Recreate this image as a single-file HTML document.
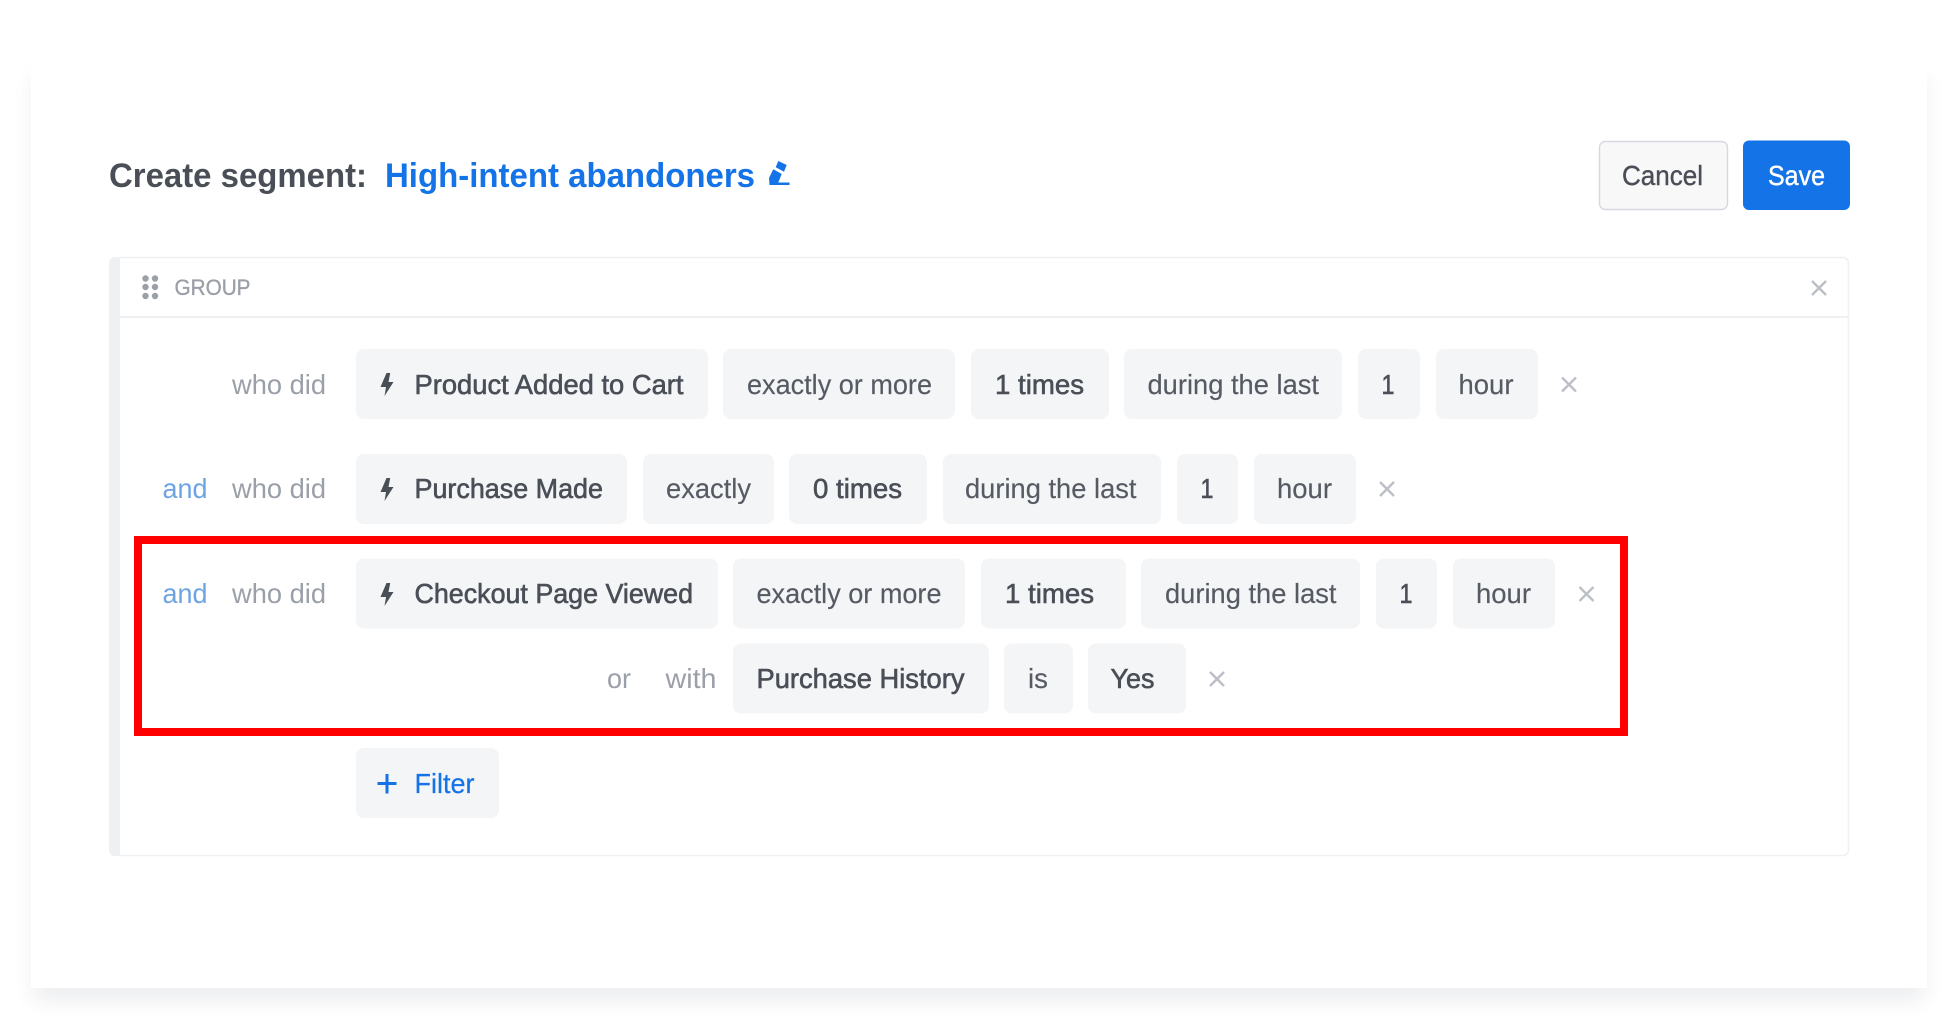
<!DOCTYPE html>
<html><head><meta charset="utf-8"><title>Create segment</title>
<style>
html,body{margin:0;padding:0;background:#fff;width:1958px;height:1016px;overflow:hidden}
#card{position:absolute;left:31px;top:60px;width:1896px;height:928px;background:#fff;box-shadow:0 15px 20px -3px rgba(40,50,70,.085)}
svg{position:absolute;left:0;top:0}
text{font-family:"Liberation Sans",sans-serif;font-size:27.5px;fill:#50555d}
.c{fill:#f4f5f7}
.m{fill:#4a4f57;stroke:#4a4f57;stroke-width:.6px}
.r{fill:#565b63;stroke:#565b63;stroke-width:.15px}
.g{fill:#9a9fa8}
.a{fill:#6ea3e2}
.x{stroke:#bcc0c6;stroke-width:2.4;fill:none}
.t{font-size:34.5px;font-weight:700}
</style></head><body>
<div id="card"></div>
<svg width="1958" height="1016" viewBox="0 0 1958 1016" xmlns="http://www.w3.org/2000/svg">
<defs>
<path id="b" d="M386.500 373H390.200L388.500 382H393.500L384.500 396L386 387H380.500Z" fill="#4a4f57"/>
<path id="xx" d="M-7 -7L7 7M7 -7L-7 7" class="x"/>
</defs>

<!-- Title -->
<text class="t" x="109" y="187" textLength="258" lengthAdjust="spacingAndGlyphs" style="fill:#4a4f57">Create segment:</text>
<text class="t" x="385" y="187" textLength="370" lengthAdjust="spacingAndGlyphs" style="fill:#1473e6">High-intent abandoners</text>
<path d="M778.300 161L786.700 165L784 171.700L775.700 167.300ZM773.300 169.300L781.700 174L778.300 182.500H789.500V185H769.500L769 178Z" fill="#1473e6"/>

<!-- Buttons -->
<rect x="1599.500" y="141.500" width="128" height="68" rx="6" fill="#f8f8f9" stroke="#d5d9df" stroke-width="1.4"/>
<text x="1622" y="185" textLength="81" lengthAdjust="spacingAndGlyphs" class="m" style="stroke-width:.4px">Cancel</text>
<rect x="1743" y="140.500" width="107" height="69.500" rx="6" fill="#1473e6"/>
<text x="1768" y="185" textLength="57" lengthAdjust="spacingAndGlyphs" style="fill:#fff;stroke:#fff;stroke-width:.4px">Save</text>

<!-- Panel -->
<rect x="109" y="257" width="1740" height="599" rx="6" fill="#eef0f2"/>
<path d="M120 258H1843a5 5 0 0 1 5 5V850a5 5 0 0 1-5 5H120Z" fill="#fff"/>
<path d="M120 257.500H1843a5.500 5.500 0 0 1 5.500 5.500V850a5.500 5.500 0 0 1-5.500 5.500H120" fill="none" stroke="#eff0f2" stroke-width="1.6"/>
<path d="M120 317H1849" stroke="#eff0f2" stroke-width="2"/>
<g fill="#9a9fa8">
<circle cx="145.500" cy="278.500" r="3.200"/><circle cx="155" cy="278.500" r="3.200"/>
<circle cx="145.500" cy="287" r="3.200"/><circle cx="155" cy="287" r="3.200"/>
<circle cx="145.500" cy="296" r="3.200"/><circle cx="155" cy="296" r="3.200"/>
</g>
<text x="174.500" y="295" textLength="76" lengthAdjust="spacingAndGlyphs" class="g" style="font-size:22.5px;stroke:#9a9fa8;stroke-width:.35px">GROUP</text>
<use href="#xx" x="1819" y="288"/>

<!-- Row 1 -->
<text x="232" y="394" textLength="94" lengthAdjust="spacingAndGlyphs" class="g">who did</text>
<rect class="c" x="356" y="349" width="352" height="70" rx="8"/>
<use href="#b"/>
<text class="m" x="414.500" y="394" textLength="269" lengthAdjust="spacingAndGlyphs">Product Added to Cart</text>
<rect class="c" x="723" y="349" width="232" height="70" rx="8"/>
<text class="r" x="747" y="394" textLength="185" lengthAdjust="spacingAndGlyphs">exactly or more</text>
<rect class="c" x="971" y="349" width="138" height="70" rx="8"/>
<text class="m" x="995" y="394" textLength="89" lengthAdjust="spacingAndGlyphs">1 times</text>
<rect class="c" x="1124" y="349" width="218" height="70" rx="8"/>
<text class="r" x="1147.500" y="394" textLength="171.500" lengthAdjust="spacingAndGlyphs">during the last</text>
<rect class="c" x="1358" y="349" width="62" height="70" rx="8"/>
<text class="m" x="1381.500" y="394" textLength="13" lengthAdjust="spacingAndGlyphs">1</text>
<rect class="c" x="1436" y="349" width="102" height="70" rx="8"/>
<text class="r" x="1458.500" y="394" textLength="55" lengthAdjust="spacingAndGlyphs">hour</text>
<use href="#xx" x="1569" y="384.500"/>

<!-- Row 2 -->
<text x="162.500" y="498" textLength="45" lengthAdjust="spacingAndGlyphs" class="a">and</text>
<text x="232" y="498" textLength="94" lengthAdjust="spacingAndGlyphs" class="g">who did</text>
<rect class="c" x="356" y="454" width="271" height="70" rx="8"/>
<use href="#b" y="105"/>
<text class="m" x="414.500" y="498" textLength="188.500" lengthAdjust="spacingAndGlyphs">Purchase Made</text>
<rect class="c" x="643" y="454" width="131" height="70" rx="8"/>
<text class="r" x="666" y="498" textLength="85" lengthAdjust="spacingAndGlyphs">exactly</text>
<rect class="c" x="789" y="454" width="138" height="70" rx="8"/>
<text class="m" x="813" y="498" textLength="89" lengthAdjust="spacingAndGlyphs">0 times</text>
<rect class="c" x="943" y="454" width="218" height="70" rx="8"/>
<text class="r" x="965" y="498" textLength="171.500" lengthAdjust="spacingAndGlyphs">during the last</text>
<rect class="c" x="1177" y="454" width="61" height="70" rx="8"/>
<text class="m" x="1200.500" y="498" textLength="13" lengthAdjust="spacingAndGlyphs">1</text>
<rect class="c" x="1254" y="454" width="102" height="70" rx="8"/>
<text class="r" x="1277" y="498" textLength="55" lengthAdjust="spacingAndGlyphs">hour</text>
<use href="#xx" x="1387" y="489"/>

<!-- Row 3 -->
<text x="162.500" y="603" textLength="45" lengthAdjust="spacingAndGlyphs" class="a">and</text>
<text x="232" y="603" textLength="94" lengthAdjust="spacingAndGlyphs" class="g">who did</text>
<rect class="c" x="356" y="558.500" width="362" height="70" rx="8"/>
<use href="#b" y="210"/>
<text class="m" x="414.500" y="603" textLength="278.500" lengthAdjust="spacingAndGlyphs">Checkout Page Viewed</text>
<rect class="c" x="733" y="558.500" width="232" height="70" rx="8"/>
<text class="r" x="756.500" y="603" textLength="185" lengthAdjust="spacingAndGlyphs">exactly or more</text>
<rect class="c" x="981" y="558.500" width="145" height="70" rx="8"/>
<text class="m" x="1005" y="603" textLength="89" lengthAdjust="spacingAndGlyphs">1 times</text>
<rect class="c" x="1141" y="558.500" width="219" height="70" rx="8"/>
<text class="r" x="1165" y="603" textLength="171.500" lengthAdjust="spacingAndGlyphs">during the last</text>
<rect class="c" x="1376" y="558.500" width="61" height="70" rx="8"/>
<text class="m" x="1399.500" y="603" textLength="13" lengthAdjust="spacingAndGlyphs">1</text>
<rect class="c" x="1453" y="558.500" width="102" height="70" rx="8"/>
<text class="r" x="1476" y="603" textLength="55" lengthAdjust="spacingAndGlyphs">hour</text>
<use href="#xx" x="1586.500" y="594"/>

<!-- Row 3b -->
<text x="607" y="688" textLength="24" lengthAdjust="spacingAndGlyphs" class="g">or</text>
<text x="665.500" y="688" textLength="51" lengthAdjust="spacingAndGlyphs" class="g">with</text>
<rect class="c" x="733" y="643.500" width="256" height="70" rx="8"/>
<text class="m" x="756.500" y="688" textLength="208" lengthAdjust="spacingAndGlyphs">Purchase History</text>
<rect class="c" x="1004" y="643.500" width="69" height="70" rx="8"/>
<text class="r" x="1028" y="688" textLength="20" lengthAdjust="spacingAndGlyphs">is</text>
<rect class="c" x="1088" y="643.500" width="98" height="70" rx="8"/>
<text class="m" x="1110.500" y="688" textLength="44" lengthAdjust="spacingAndGlyphs">Yes</text>
<use href="#xx" x="1217" y="679"/>

<!-- Filter -->
<rect class="c" x="356" y="748" width="143" height="70" rx="8"/>
<path d="M387 774V793.500M377.500 783.500H396.500" stroke="#1473e6" stroke-width="3" fill="none"/>
<text x="414.500" y="793" textLength="60" lengthAdjust="spacingAndGlyphs" style="fill:#1473e6;stroke:#1473e6;stroke-width:.2px">Filter</text>

<!-- Red highlight -->
<rect x="138" y="540" width="1486" height="192" fill="none" stroke="#ff0000" stroke-width="8"/>
</svg>
</body></html>
